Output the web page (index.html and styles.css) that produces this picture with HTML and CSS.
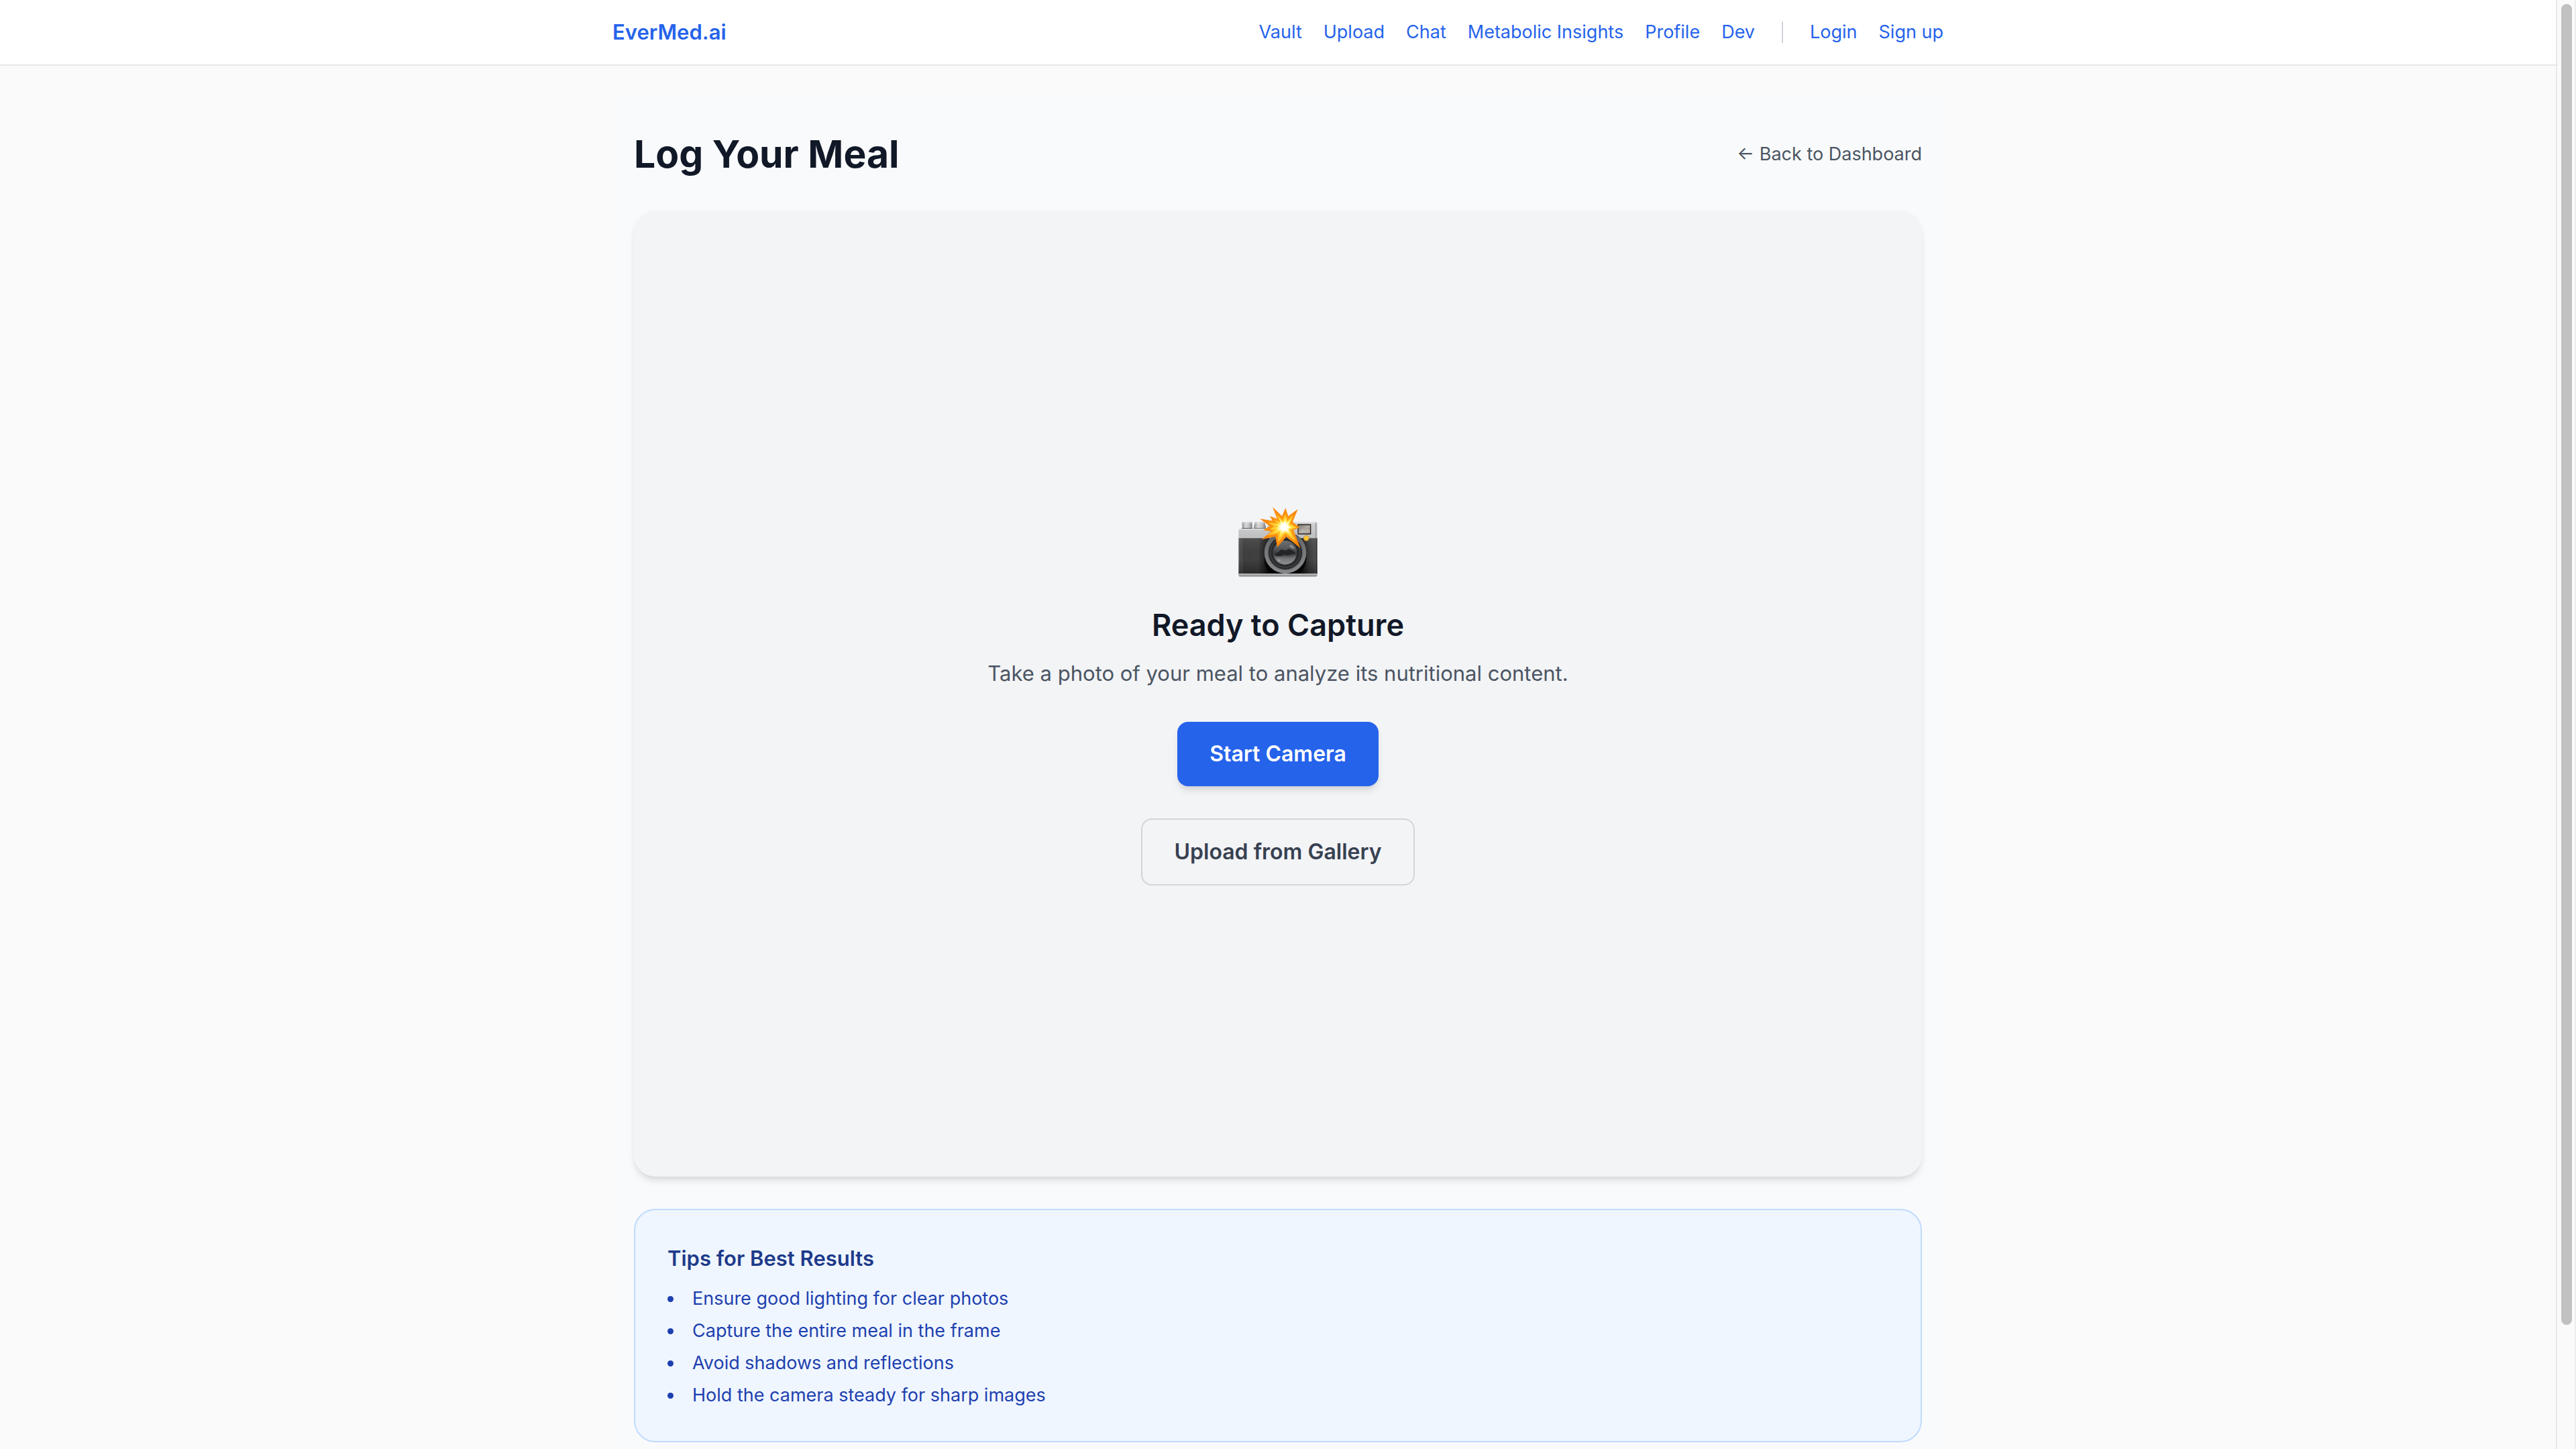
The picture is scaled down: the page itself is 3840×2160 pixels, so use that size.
FILE: index.html
```html
<!DOCTYPE html>
<html lang="en">
<head>
  <meta charset="utf-8">
  <meta name="viewport" content="width=device-width, initial-scale=1">
  <title>EverMed.ai</title>
  <link rel="stylesheet" href="styles.css">
</head>
<body>
  <div class="viewport">
    <div class="page">
      <header class="site-header">
        <div class="container site-header__inner">
          <a class="logo" href="#">EverMed.ai</a>
          <nav class="nav" aria-label="Main">
            <a href="#">Vault</a>
            <a href="#">Upload</a>
            <a href="#">Chat</a>
            <a href="#">Metabolic Insights</a>
            <a href="#">Profile</a>
            <a href="#">Dev</a>
            <span class="nav__divider"></span>
            <a href="#">Login</a>
            <a href="#">Sign up</a>
          </nav>
        </div>
      </header>
      <main class="container main">
        <div class="content">
          <div class="title-row">
            <h1 class="title">Log Your Meal</h1>
            <a class="back-link" href="#">← Back to Dashboard</a>
          </div>

          <section class="capture">
            <svg class="capture__icon" viewBox="0 54 510 360" role="img" aria-label="Camera with flash">
              <defs>
                <linearGradient id="silver" x1="0" y1="0" x2="0" y2="1">
                  <stop offset="0" stop-color="#dcdcdd"/>
                  <stop offset="0.2" stop-color="#cbcccd"/>
                  <stop offset="1" stop-color="#bdbebf"/>
                </linearGradient>
                <linearGradient id="dial" x1="0" y1="0" x2="1" y2="0">
                  <stop offset="0" stop-color="#8e8f90"/>
                  <stop offset="0.35" stop-color="#d9d9da"/>
                  <stop offset="0.65" stop-color="#c2c3c4"/>
                  <stop offset="1" stop-color="#7f8081"/>
                </linearGradient>
                <linearGradient id="leather" x1="0" y1="0" x2="1" y2="0">
                  <stop offset="0" stop-color="#555556"/>
                  <stop offset="0.05" stop-color="#3a3a3b"/>
                  <stop offset="0.25" stop-color="#3c3c3d"/>
                  <stop offset="0.38" stop-color="#0c0c0c"/>
                  <stop offset="0.8" stop-color="#111112"/>
                  <stop offset="0.9" stop-color="#39393a"/>
                  <stop offset="0.96" stop-color="#474748"/>
                  <stop offset="1" stop-color="#2d2d2e"/>
                </linearGradient>
                <linearGradient id="shade" x1="0" y1="0" x2="0" y2="1">
                  <stop offset="0" stop-color="#fff" stop-opacity="0.08"/>
                  <stop offset="0.6" stop-color="#000" stop-opacity="0"/>
                  <stop offset="1" stop-color="#000" stop-opacity="0.35"/>
                </linearGradient>
                <linearGradient id="ring" x1="0" y1="0" x2="0" y2="1">
                  <stop offset="0" stop-color="#5f6163"/>
                  <stop offset="0.5" stop-color="#77797b"/>
                  <stop offset="1" stop-color="#87898b"/>
                </linearGradient>
                <linearGradient id="glass" x1="0" y1="0" x2="0" y2="1">
                  <stop offset="0" stop-color="#6d6f71"/>
                  <stop offset="0.3" stop-color="#595b5d"/>
                  <stop offset="0.55" stop-color="#3a3c3e"/>
                  <stop offset="0.72" stop-color="#66696c"/>
                  <stop offset="1" stop-color="#8f9294"/>
                </linearGradient>
                <linearGradient id="finder" x1="0" y1="0" x2="1" y2="1">
                  <stop offset="0" stop-color="#807b76"/>
                  <stop offset="0.5" stop-color="#aea8a2"/>
                  <stop offset="1" stop-color="#8d8883"/>
                </linearGradient>
                <radialGradient id="burst" gradientUnits="userSpaceOnUse" cx="282" cy="168" r="100">
                  <stop offset="0" stop-color="#ffa51e"/>
                  <stop offset="1" stop-color="#f98208"/>
                </radialGradient>
                <radialGradient id="glow" gradientUnits="userSpaceOnUse" cx="282" cy="168" r="30">
                  <stop offset="0" stop-color="#fff"/>
                  <stop offset="0.4" stop-color="#fff"/>
                  <stop offset="1" stop-color="#fff27a" stop-opacity="0"/>
                </radialGradient>
                <pattern id="grain" width="9" height="9" patternUnits="userSpaceOnUse">
                  <path d="M1 2h2M6 1h2M4 5h2M1 8h2M7 7h1" stroke="#fff" stroke-opacity="0.09" stroke-width="2"/>
                </pattern>
              </defs>
              <path d="M95 148q0-4 5-4h35q5 0 5 4v28H95z" fill="url(#dial)"/>
              <path d="M150 148q0-4 5-4h38q5 0 5 4v12h3v18h-54v-18h3z" fill="url(#dial)"/>
              <path d="M95 148h45M150 148h48" stroke="#e7e7e8" stroke-width="3"/>
              <path d="M93 173h49M147 174h54" stroke="#58595a" stroke-width="4"/>
              <path d="M79 182q0-8 7-8h118l12-27q2-4 6-4h201q8 0 8 8v70H79z" fill="url(#silver)"/>
              <path d="M81 177h124M216 145h212" stroke="#ececed" stroke-width="3"/>
              <path d="M425 146v72" stroke="#96979a" stroke-width="4"/>
              <path d="M79 217h352v161H79z" fill="url(#leather)"/>
              <path d="M79 217h352v161H79z" fill="url(#grain)"/>
              <path d="M79 217h352v161H79z" fill="url(#shade)"/>
              <path d="M95 219v156M422 219v156" stroke="#717172" stroke-opacity="0.45" stroke-width="3"/>
              <path d="M79 375h352v8q0 5-6 5H85q-6 0-6-5z" fill="#a0a1a3"/>
              <path d="M80 377h350" stroke="#cfd0d1" stroke-width="3"/>
              <path d="M82 387h346" stroke="#707173" stroke-width="2"/>
              <rect x="343" y="154" width="60" height="46" rx="2" fill="#292522"/>
              <rect x="347" y="158" width="52" height="38" fill="url(#finder)"/>
              <path d="M350 192l14-14 12 5 12-6 10 4v12z" fill="#c8c1ba" fill-opacity="0.6"/>
              <circle cx="382" cy="217" r="13" fill="#c58b1c"/>
              <circle cx="382" cy="216" r="10" fill="#fac63c"/>
              <path d="M196 295q-8 65 34 80h118q37-23 34-80z" fill="#000" fill-opacity="0.7"/>
              <circle cx="288" cy="281" r="94" fill="#626466"/>
              <circle cx="288" cy="281" r="86" fill="none" stroke="url(#ring)" stroke-width="14"/>
              <circle cx="288" cy="281" r="75" fill="#28292a"/>
              <circle cx="288" cy="281" r="69" fill="#3c3e40"/>
              <circle cx="288" cy="281" r="63" fill="#1c1d1e"/>
              <circle cx="288" cy="281" r="59" fill="none" stroke="#494b4d" stroke-width="2"/>
              <circle cx="287" cy="281" r="54" fill="url(#glass)"/>
              <path d="M238 290l18-10 14-13 20 5 14-7 18 7 12 13-16 4-20 5-18-2-12 6-21-2z" fill="#232527"/>
              <path d="M240 302q26-4 47 3t47-10q-1 16-13 27-35 20-69-1z" fill="#888b8e" fill-opacity="0.35"/>
              <path d="M252 310l17 4-10 8zM314 246l16 15-8 2-17-10z" fill="#b7babc" fill-opacity="0.6"/>
              <path d="M231 77L273 118L289 82L301 118L344 87L321 144L352 169L325 181L355 261L292 211L252 257L243 209L181 223L225 187L189 181L218 163L174 130L230 139L219 118L251 130Z" fill="url(#burst)"/>
              <path d="M248 108L275 137L289 108L298 137L325 111L309 151L339 169L311 180L335 232L288 196L256 235L255 195L207 205L239 181L217 178L238 164L211 146L251 150L239 134L264 143Z" fill="#ffc62b"/>
              <path d="M259 126L277 144L289 124L296 145L314 128L304 155L326 169L304 178L317 207L286 187L263 213L265 186L235 192L254 176L237 174L256 164L235 153L261 156L254 145L269 151Z" fill="#ffe751"/>
              <path d="M266 139L279 152L288 138L293 152L305 141L298 160L312 169L298 174L305 192L284 180L271 195L272 178L251 180L265 170L254 168L267 162L252 155L270 158Z" fill="#fff"/>
              <circle cx="282" cy="168" r="28" fill="url(#glow)"/>
            </svg>
            <h2 class="capture__title">Ready to Capture</h2>
            <p class="capture__text">Take a photo of your meal to analyze its nutritional content.</p>
            <div class="capture__actions">
              <button class="button button--primary" type="button">Start Camera</button>
              <button class="button button--outline" type="button">Upload from Gallery</button>
            </div>
          </section>

          <section class="tips">
            <h3 class="tips__title">Tips for Best Results</h3>
            <ul class="tips__list">
              <li>Ensure good lighting for clear photos</li>
              <li>Capture the entire meal in the frame</li>
              <li>Avoid shadows and reflections</li>
              <li>Hold the camera steady for sharp images</li>
            </ul>
          </section>
        </div>
      </main>
    </div>
    <div class="scrollbar"><div class="scrollbar__thumb"></div></div>
  </div>
</body>
</html>
```
FILE: styles.css
```css
*,
*::before,
*::after {
  box-sizing: border-box;
}

body {
  margin: 0;
  background: #fafafa;
  color: #111827;
  font-family: Inter, "Liberation Sans", sans-serif;
  font-size: 31px;
  line-height: 48px;
}

h1, h2, h3, p, ul {
  margin: 0;
}

a {
  color: inherit;
  text-decoration: none;
}

.viewport {
  display: flex;
  height: 100vh;
  overflow: hidden;
}

.page {
  flex: 1;
  min-width: 0;
}

.container {
  width: 100%;
  max-width: 2048px;
  margin: 0 auto;
  padding: 0 32px;
}

/* Header */
.site-header {
  background: #fff;
  border-bottom: 2px solid #e5e7eb;
}

.site-header__inner {
  display: flex;
  align-items: center;
  justify-content: space-between;
  padding-top: 24px;
  padding-bottom: 24px;
}

.logo {
  color: #2563eb;
  font-weight: 600;
}

.nav {
  display: flex;
  align-items: center;
  gap: 32px;
  color: #2563eb;
  font-size: 27px;
  line-height: 40px;
}

.nav__divider {
  width: 2px;
  height: 32px;
  margin: 0 8px;
  background: #d1d5db;
}

/* Main */
.main {
  padding-top: 48px;
  padding-bottom: 48px;
}

.content {
  display: flex;
  flex-direction: column;
  gap: 48px;
  padding: 48px 32px;
  background: #f9fafb;
}

.title-row {
  display: flex;
  align-items: center;
  justify-content: space-between;
}

.title {
  font-size: 57px;
  line-height: 72px;
  font-weight: 700;
}

.back-link {
  color: #4b5563;
  font-size: 27px;
  line-height: 40px;
}

/* Capture card */
.capture {
  display: flex;
  flex-direction: column;
  align-items: center;
  justify-content: center;
  aspect-ratio: 4 / 3;
  border-radius: 32px;
  background: #f3f4f6;
  box-shadow: 0 8px 12px -2px rgb(0 0 0 / 0.1), 0 4px 8px -4px rgb(0 0 0 / 0.1);
  text-align: center;
}

.capture__icon {
  width: 170px;
  height: 120px;
  margin-bottom: 32px;
}

.capture__title {
  margin-bottom: 16px;
  font-size: 45px;
  line-height: 64px;
  font-weight: 600;
}

.capture__text {
  margin-bottom: 48px;
  color: #4b5563;
}

.capture__actions {
  display: flex;
  flex-direction: column;
  align-items: center;
  gap: 48px;
}

.button {
  padding: 24px 48px;
  border: 0;
  border-radius: 16px;
  font: inherit;
  font-size: 32px;
  font-weight: 600;
}

.button--primary {
  background: #2563eb;
  color: #fff;
  box-shadow: 0 8px 12px -2px rgb(0 0 0 / 0.1), 0 4px 8px -4px rgb(0 0 0 / 0.1);
}

.button--outline {
  border: 2px solid #d1d5db;
  background: transparent;
  color: #374151;
}

/* Tips */
.tips {
  padding: 48px;
  border: 2px solid #bfdbfe;
  border-radius: 32px;
  background: #eff6ff;
}

.tips__title {
  margin-bottom: 16px;
  color: #1e3a8a;
  font-size: 31px;
  font-weight: 600;
}

.tips__list {
  display: flex;
  flex-direction: column;
  gap: 8px;
  padding: 0;
  color: #1e40af;
  font-size: 27px;
  line-height: 40px;
  list-style: disc inside;
}

/* Scroll track */
.scrollbar {
  width: 30px;
  padding: 6px 4px 0 6px;
  border-left: 2px solid #e8e8e8;
  border-right: 2px solid #ededed;
  background: #fafafa;
}

.scrollbar__thumb {
  width: 16px;
  height: 91.4%;
  border-radius: 8px;
  background: #c1c1c1;
}
```
